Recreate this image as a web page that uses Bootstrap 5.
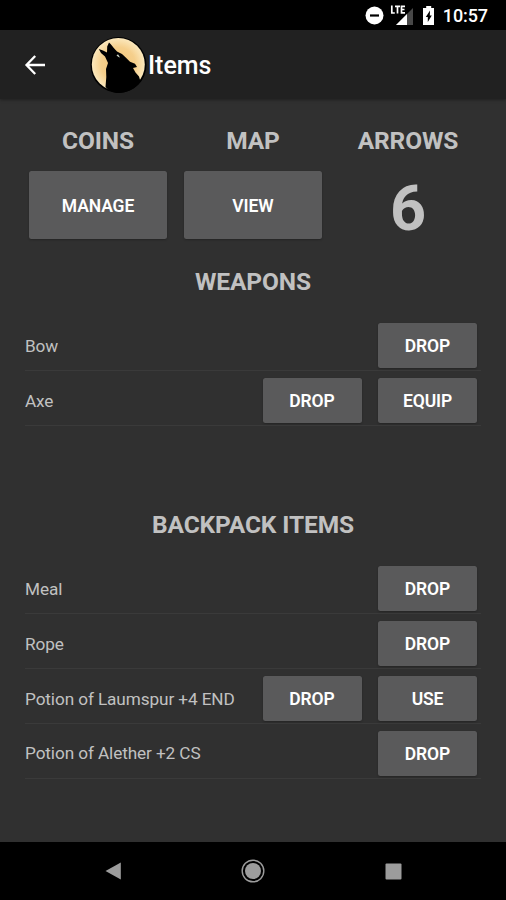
<!DOCTYPE html>
<html lang="en" data-bs-theme="dark">
<head>
<meta charset="utf-8">
<meta name="viewport" content="width=device-width, initial-scale=1">
<title>Items</title>
<link href="https://cdn.jsdelivr.net/npm/bootstrap@5.3.0/dist/css/bootstrap.min.css" rel="stylesheet">
<style>
  body { font-family: Roboto, "Liberation Sans", sans-serif; background: #303030; color: #c1c1c1; height: 900px; overflow: hidden; }
  .status-bar { height: 30px; background: #000; color: #fff; padding: 0 18px 0 0; }
  .clock { font-size: 18px; font-weight: 500; line-height: 30px; letter-spacing: -.1px; margin-left: 6px; padding-top: 2px; }
  .app-bar { height: 69px; background: #212121; padding: 1px 0 0 23px; box-shadow: 0 1px 3px rgba(0,0,0,.35); }
  .app-icon { margin-left: 42px; }
  .app-title { color: #fff; font-size: 25px; font-weight: 500; line-height: 30px; padding-top: 2px; }
  .summary { padding: 26px 20.5px 0; }
  .section-title { color: #c1c1c1; font-size: 24.5px; font-weight: 700; line-height: 32px; margin: 0; text-align: center; letter-spacing: -.12px; }
  .summary .section-title { line-height: 31px; }
  .tile-btn, .row-btn { --bs-btn-bg: #5a5a5b; --bs-btn-color: #fff; --bs-btn-hover-bg: #69696a; --bs-btn-hover-color: #fff; --bs-btn-border-width: 0; --bs-btn-border-radius: 2.5px; --bs-btn-padding-x: 0; --bs-btn-padding-y: 0; --bs-btn-font-weight: 600; --bs-btn-font-size: 17.5px; letter-spacing: -.1px; padding-top: 2px; box-shadow: 0 1px 2px rgba(0,0,0,.25); }
  .tile-btn { width: 138px; height: 68px; margin-top: 15px; padding-top: 3px; }
  .row-btn { width: 99px; height: 45px; padding-top: 1px; }
  .arrow-count { font-size: 63px; font-weight: 700; line-height: 68px; margin-top: 19px; }
  .weapons { padding-top: 23px; height: 266px; }
  .item-list { margin: 18.5px 25px 0; }
  .item-row { height: 54.87px; gap: 16.5px; padding: 5px 4px 0 0; border-bottom: 1px solid #3a3a3a; font-size: 17.2px; letter-spacing: -.1px; }
  .item-name { padding-top: 1.5px; }
  .nav-keys { height: 58px; background: #000; padding: 0 104px 0 105px; }
</style>
</head>
<body class="d-flex flex-column">
  <div class="status-bar d-flex align-items-center justify-content-end flex-shrink-0">
    <svg width="72" height="22" viewBox="0 0 72 22">
      <circle cx="9.5" cy="11.5" r="9" fill="#fff"/><path d="M5 11.5h9" stroke="#000" stroke-width="2.2"/>
      <path d="M48 4v17H31z" fill="#484848"/><path d="M42 10v11H31z" fill="#fff"/>
      <path d="M26.800 1.500v7.500h3M30 2.300h5M32.500 2.300v7.200M40 2.300h-3.500v6.500h3.500M36.500 5.500h3" fill="none" stroke="#fff" stroke-width="1.700"/>
      <path d="M61.200 2h5v2h2.800v17h-11V4h3.200z" fill="#fff"/><path d="M65 6.500l-4.200 6.500h2v5l4-6.500h-2z" fill="#000"/>
    </svg>
    <span class="clock">10:57</span>
  </div>
  <header class="app-bar d-flex align-items-center flex-shrink-0">
    <svg width="25" height="24" viewBox="0 0 25 24"><path d="M22 12H4M12.200 3L3.500 12l8.700 9" fill="none" stroke="#fff" stroke-width="2.300"/></svg>
    <svg class="app-icon" width="58" height="58" viewBox="0 0 58 58">
      <defs><radialGradient id="moon"><stop offset="0" stop-color="#f3c578"/><stop offset=".65" stop-color="#f5cf8c"/><stop offset="1" stop-color="#fbe8bd"/></radialGradient></defs>
      <circle cx="28.500" cy="29" r="28" fill="#000"/>
      <circle cx="28.300" cy="28.500" r="26.500" fill="url(#moon)"/>
      <path d="M15.500 51l.8-10-.3-8 2-6-3-6.500-4-3.500-2.200-4 4.200 1.500 4 2 .2-6 1.800-4 1.800 1.800 3.200 4 3 3.200 5 2.500 4 3.800 4 4 5 2 2 3.200-4 1 2.500 4.500 3.500 4 1.500 5C45 53 37 57 28.500 57c-5 0-10-2.500-13-6z" fill="#000"/>
      <path d="M26.500 19.500l1.500-1.300 2 3.300-1.500-.4z" fill="#cfd8c9"/>
    </svg>
    <span class="app-title">Items</span>
  </header>
  <main class="flex-grow-1">
    <section class="summary row g-0 text-center">
      <div class="col-4"><h2 class="section-title">COINS</h2><button type="button" class="btn tile-btn">MANAGE</button></div>
      <div class="col-4"><h2 class="section-title">MAP</h2><button type="button" class="btn tile-btn">VIEW</button></div>
      <div class="col-4"><h2 class="section-title">ARROWS</h2><div class="arrow-count">6</div></div>
    </section>
    <section class="weapons">
      <h2 class="section-title">WEAPONS</h2>
      <div class="item-list">
        <div class="item-row d-flex align-items-center"><span class="item-name me-auto">Bow</span><button type="button" class="btn row-btn">DROP</button></div>
        <div class="item-row d-flex align-items-center"><span class="item-name me-auto">Axe</span><button type="button" class="btn row-btn">DROP</button><button type="button" class="btn row-btn">EQUIP</button></div>
      </div>
    </section>
    <section class="backpack">
      <h2 class="section-title">BACKPACK ITEMS</h2>
      <div class="item-list">
        <div class="item-row d-flex align-items-center"><span class="item-name me-auto">Meal</span><button type="button" class="btn row-btn">DROP</button></div>
        <div class="item-row d-flex align-items-center"><span class="item-name me-auto">Rope</span><button type="button" class="btn row-btn">DROP</button></div>
        <div class="item-row d-flex align-items-center"><span class="item-name me-auto">Potion of Laumspur +4 END</span><button type="button" class="btn row-btn">DROP</button><button type="button" class="btn row-btn">USE</button></div>
        <div class="item-row d-flex align-items-center"><span class="item-name me-auto">Potion of Alether +2 CS</span><button type="button" class="btn row-btn">DROP</button></div>
      </div>
    </section>
  </main>
  <footer class="nav-keys d-flex align-items-center justify-content-between flex-shrink-0">
    <svg width="16" height="18" viewBox="0 0 16 18"><path d="M15.800.5v17L.5 9z" fill="#9c9c9c"/></svg>
    <svg width="24" height="24" viewBox="0 0 24 24"><circle cx="12" cy="12" r="10.800" fill="none" stroke="#9c9c9c" stroke-width="1.400"/><circle cx="12" cy="12" r="8" fill="#9c9c9c"/></svg>
    <svg width="17" height="17" viewBox="0 0 17 17"><rect x=".5" y=".5" width="16" height="16" rx="1" fill="#9c9c9c"/></svg>
  </footer>
<script src="https://cdn.jsdelivr.net/npm/bootstrap@5.3.0/dist/js/bootstrap.bundle.min.js"></script>
</body>
</html>
